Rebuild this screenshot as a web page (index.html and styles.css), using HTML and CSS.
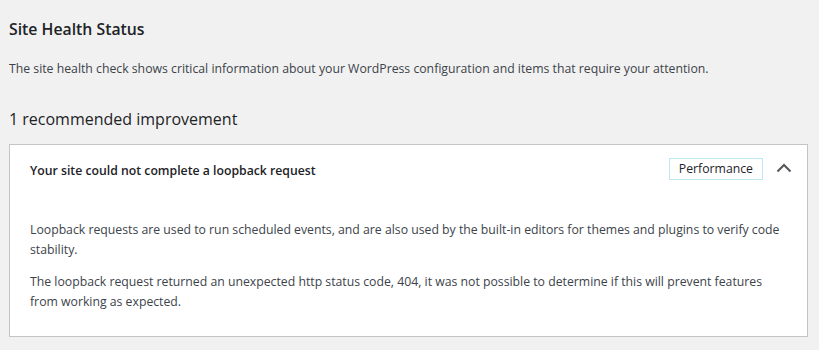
FILE: index.html
```html
<!DOCTYPE html>
<html lang="en">
<head>
  <meta charset="UTF-8">
  <meta name="viewport" content="width=device-width, initial-scale=1.0">
  <title>Site Health Status</title>
  <link rel="stylesheet" href="styles.css">
</head>
<body>
  <div class="wrap">
    <h2 class="page-title">Site Health Status</h2>
    <p class="intro">The site health check shows critical information about your WordPress configuration and items that require your attention.</p>

    <h3 class="issue-count">1 recommended improvement</h3>

    <div class="issue">
      <div class="issue-header">
        <span class="issue-title">Your site could not complete a loopback request</span>
        <span class="badge">Performance</span>
        <svg class="chevron" width="16" height="10" viewBox="0 0 16 10" aria-hidden="true">
          <polyline points="1.5,8.5 8,2 14.5,8.5" fill="none" stroke="#50575e" stroke-width="2"/>
        </svg>
      </div>
      <div class="issue-panel">
        <p>Loopback requests are used to run scheduled events, and are also used by the built-in editors for themes and plugins to verify code stability.</p>
        <p>The loopback request returned an unexpected http status code, 404, it was not possible to determine if this will prevent features from working as expected.</p>
      </div>
    </div>
  </div>
</body>
</html>
```
FILE: styles.css
```css
body {
  font-family: "Open Sans", "Noto Sans", sans-serif;
  font-size: 12.25px;
  line-height: 19.5px;
  color: #3c434a;
  background-color: #f1f1f1;
  margin: 0;
  padding: 0;
}
.wrap {
  padding: 18px 11px 0 9px;
}
.page-title {
  font-size: 15.8px;
  font-weight: 600;
  line-height: 22px;
  color: #1d2327;
  margin: 0 0 19px;
}
.intro {
  margin: 0;
}
.issue-count {
  font-size: 16px;
  font-weight: 400;
  line-height: 24px;
  color: #1d2327;
  margin: 28px 0 13px;
}
.issue {
  background-color: #fff;
  border: 1px solid #c3c4c7;
}
.issue-header {
  display: flex;
  align-items: flex-start;
  padding: 13px 15px 14px 20px;
}
.issue-title {
  flex: 1;
  font-weight: 600;
  color: #1d2327;
  margin-top: 3px;
}
.badge {
  border: 1px solid #bfe7f3;
  padding: 0 9px;
  line-height: 20px;
  color: #1d2327;
}
.chevron {
  display: block;
  margin: 5px 0 0 13px;
}
.issue-panel {
  padding: 13px 20px 12px;
}
.issue-panel p {
  margin: 13px 0;
}
```
